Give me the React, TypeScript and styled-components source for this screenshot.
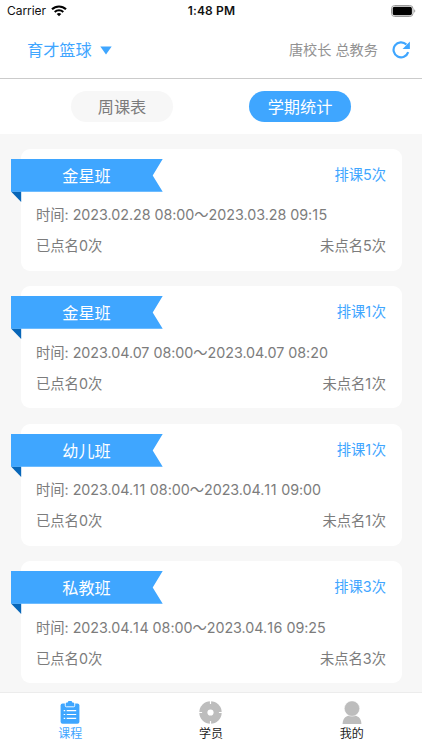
import React from 'react';
import styled, { createGlobalStyle } from 'styled-components';

const BLUE = '#3fa6ff';

const GlobalStyle = createGlobalStyle`
  * { box-sizing: border-box; }
  body {
    margin: 0;
    background: #fff;
    font-family: Inter, "Noto Sans CJK SC", sans-serif;
    font-size: 14px;
    color: #7c7c7c;
  }
`;

const Screen = styled.div`
  width: 422px;
  height: 750px;
  display: flex;
  flex-direction: column;
  overflow: hidden;
`;

const StatusBar = styled.div`
  flex: none;
  height: 22px;
  display: grid;
  grid-template-columns: 1fr auto 1fr;
  align-items: center;
  padding: 0 6px 0 7px;
  color: #111;
  font-size: 12px;
  line-height: 22px;
`;

const Carrier = styled.div`
  display: flex;
  align-items: center;
  gap: 5px;
  letter-spacing: -0.05px;
`;

const Clock = styled.div`
  font-weight: 600;
  letter-spacing: 0.15px;
`;

const BatterySlot = styled.div`
  display: flex;
  justify-content: flex-end;
`;

const Header = styled.header`
  flex: none;
  height: 57px;
  display: flex;
  align-items: center;
  justify-content: space-between;
  padding: 0 12px 0.5px 27px;
  border-bottom: 1.5px solid #cbcbcb;
`;

const School = styled.div`
  display: flex;
  align-items: center;
  gap: 8.5px;
  color: ${BLUE};
  font-size: 16.2px;
  line-height: 22px;
`;

const Account = styled.div`
  display: flex;
  align-items: center;
  gap: 14px;
  font-size: 14.2px;
  line-height: 20px;
  color: #929292;
`;

const Tabs = styled.nav`
  flex: none;
  height: 55px;
  display: flex;
  justify-content: space-between;
  align-items: center;
  padding: 0 71px;
`;

const Tab = styled.button<{ $active?: boolean }>`
  width: 102px;
  height: 31px;
  padding: 1px 0 0;
  border: 0;
  border-radius: 16px;
  font: 400 16.2px/30px Inter, "Noto Sans CJK SC", sans-serif;
  color: ${(p) => (p.$active ? '#fff' : '#7c7c7c')};
  background: ${(p) => (p.$active ? BLUE : '#f7f7f7')};
`;

const List = styled.main`
  flex: 1;
  min-height: 0;
  overflow: hidden;
  display: flex;
  flex-direction: column;
  gap: 15.4px;
  padding: 14.9px 20.5px 0;
  background: #f7f7f7;
`;

const Card = styled.article`
  flex: none;
  height: 122px;
  padding: 10px 15.5px 0 0;
  border-radius: 9px;
  background: #fff;
`;

const CardTop = styled.div`
  display: flex;
  justify-content: space-between;
  height: 33px;
  margin-left: -10px;
`;

const Ribbon = styled.div`
  position: relative;
  width: 152px;
  height: 33px;
  color: #fff;
  font-size: 16.2px;
  line-height: 35px;
  text-align: center;

  svg {
    position: absolute;
    left: 0;
    top: 0;
  }

  span { position: relative; }
`;

const Scheduled = styled.div`
  color: ${BLUE};
  font-size: 14.3px;
  line-height: 32px;
`;

const Line = styled.div<{ $top: number }>`
  display: flex;
  justify-content: space-between;
  margin-top: ${(p) => p.$top}px;
  padding-left: 15.5px;
  font-size: 14.3px;
  line-height: 20px;
  white-space: pre;
`;

const Time = styled.span`
  letter-spacing: -0.03px;
`;

const NarrowDigit = styled.span`
  letter-spacing: 0.6px;
`;

const BottomBar = styled.footer`
  flex: none;
  height: 58px;
  display: grid;
  grid-template-columns: repeat(3, 1fr);
  border-top: 1px solid #ececec;
`;

const BarItem = styled.div<{ $active?: boolean }>`
  display: flex;
  flex-direction: column;
  align-items: center;
  padding-top: 8px;
  color: ${(p) => (p.$active ? BLUE : '#222')};
  font-size: 12px;
  line-height: 19px;
`;

const WifiIcon = () => (
  <svg width="16" height="12" viewBox="0 0 16 12" fill="none" stroke="#000">
    <path d="M1 4.3a10 10 0 0 1 14 0" strokeWidth="2.1" />
    <path d="M3.7 7a6.2 6.2 0 0 1 8.6 0" strokeWidth="2" />
    <path d="M8 11.3 5.7 9a3.3 3.3 0 0 1 4.6 0z" fill="#000" stroke="none" />
  </svg>
);

const BatteryIcon = () => (
  <svg width="25" height="12" viewBox="0 0 25 12">
    <rect x="0.5" y="0.5" width="21.5" height="11" rx="3.2" fill="#fff" stroke="#999" />
    <rect x="1.7" y="1.7" width="19.2" height="8.6" rx="1.8" fill="#000" />
    <path d="M23.3 4.2c1.3.6 1.3 3 0 3.6z" fill="#888" />
  </svg>
);

const RefreshIcon = () => (
  <svg width="18" height="18" viewBox="0 0 18 18">
    <path d="M14.4 3.6A7.5 7.5 0 1 0 16.2 11.2" fill="none" stroke={BLUE} strokeWidth="2.2" />
    <path d="M17.9.6V7.9h-7.3z" fill={BLUE} />
  </svg>
);

const CaretIcon = () => (
  <svg width="12" height="10" viewBox="0 0 12 10">
    <path d="M.3 1.5h11.4L6 9.5z" fill={BLUE} />
  </svg>
);

const RibbonShape = () => (
  <svg width="152" height="44" viewBox="0 0 152 44">
    <path d="M0 32.5h10.2v10.5z" fill="#0866b8" />
    <path d="M0 0h151.7l-10 16.5 10 16.3H0z" fill={BLUE} />
  </svg>
);

const CourseIcon = () => (
  <svg width="20" height="23" viewBox="0 0 20 23">
    <rect x=".6" y="2.5" width="18.8" height="20.3" rx="2" fill={BLUE} />
    <path d="M5.3 2v2.8q0 1 1 1h7.4q1 0 1-1V2" fill={BLUE} stroke="#fff" strokeWidth=".9" />
    <path d="M6 4.7V2.2q0-.8.8-.8h.9Q8 0 9 0h2q1 0 1.3 1.4h.9q.8 0 .8.8v2.5z" fill={BLUE} />
    <path d="M3.7 9.6h1.5M6.7 9.6h9.5M3.7 13.5h1.5M6.7 13.5h9.5M3.7 17.4h1.5M6.7 17.4h9.5" stroke="#fff" strokeWidth="1.2" />
  </svg>
);

const StudentIcon = () => (
  <svg width="23" height="23" viewBox="0 0 23 23">
    <circle cx="11.5" cy="11.5" r="11.2" fill="#bdbdbd" />
    <circle cx="11.5" cy="11.5" r="3.1" fill="#fff" />
    <path d="M11.5 0v3.1M11.5 19.9V23M0 11.5h3.1M19.9 11.5H23" stroke="#fff" strokeWidth="1.2" />
  </svg>
);

const MeIcon = () => (
  <svg width="20" height="23" viewBox="0 0 20 23">
    <path d="M.6 23C.8 17 4.2 14.3 10 14.3S19.2 17 19.4 23z" fill="#bdbdbd" />
    <circle cx="10" cy="7.6" r="7.7" fill="#bdbdbd" stroke="#fff" strokeWidth=".5" />
  </svg>
);

/* Widens the proportional "1" so the timestamps keep an even rhythm. */
const spaced = (text: string) =>
  text.split(/(1)/).map((part, i) => (part === '1' ? <NarrowDigit key={i}>1</NarrowDigit> : part));

const courses = [
  { name: '金星班', count: 5, time: '2023.02.28 08:00～2023.03.28 09:15' },
  { name: '金星班', count: 1, time: '2023.04.07 08:00～2023.04.07 08:20' },
  { name: '幼儿班', count: 1, time: '2023.04.11 08:00～2023.04.11 09:00' },
  { name: '私教班', count: 3, time: '2023.04.14 08:00～2023.04.16 09:25' },
];

export default function App() {
  return (
    <Screen>
      <GlobalStyle />
      <StatusBar>
        <Carrier>Carrier <WifiIcon /></Carrier>
        <Clock>1:48 PM</Clock>
        <BatterySlot><BatteryIcon /></BatterySlot>
      </StatusBar>
      <Header>
        <School>育才篮球 <CaretIcon /></School>
        <Account>唐校长 总教务 <RefreshIcon /></Account>
      </Header>
      <Tabs>
        <Tab>周课表</Tab>
        <Tab $active>学期统计</Tab>
      </Tabs>
      <List>
        {courses.map((c, i) => (
          <Card key={i}>
            <CardTop>
              <Ribbon><RibbonShape /><span>{c.name}</span></Ribbon>
              <Scheduled>排课{spaced(String(c.count))}次</Scheduled>
            </CardTop>
            <Line $top={13.5}><Time>时间: {spaced(c.time)}</Time></Line>
            <Line $top={11}>
              <span>已点名0次</span>
              <span>未点名{spaced(String(c.count))}次</span>
            </Line>
          </Card>
        ))}
      </List>
      <BottomBar>
        <BarItem $active><CourseIcon />课程</BarItem>
        <BarItem><StudentIcon />学员</BarItem>
        <BarItem><MeIcon />我的</BarItem>
      </BottomBar>
    </Screen>
  );
}
